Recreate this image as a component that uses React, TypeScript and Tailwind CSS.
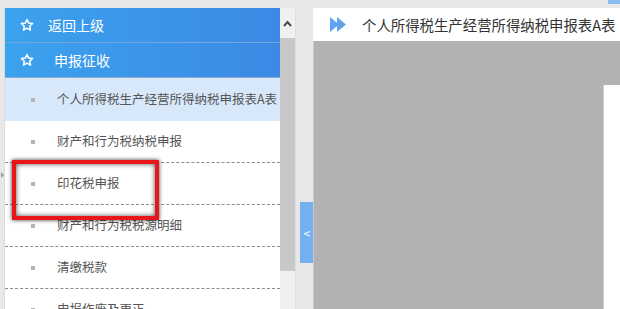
import React from 'react';

const font = { fontFamily: '"Noto Sans CJK SC", "Noto Sans", sans-serif' };

const Star = () => (
  <svg width="14" height="14" viewBox="0 0 24 24" fill="none" stroke="#ffffff" strokeWidth="2.6" strokeLinejoin="round">
    <path d="M12 2.5l2.9 6.2 6.7.8-5 4.6 1.4 6.7L12 17.4l-6 3.4 1.4-6.7-5-4.6 6.7-.8z" />
  </svg>
);

const MenuRow: React.FC<{ label: string; active?: boolean }> = ({ label, active }) => (
  <div
    className={`flex items-center shrink-0 ${
      active ? 'h-[43px] bg-[#d7e8fa]' : 'h-[42px] border-b border-dashed border-[#8c8c8c]'
    }`}
  >
    <span className="ml-[26px] w-[4px] h-[4px] bg-[#b4b4b4]" />
    <span className="ml-[22px] text-[12.5px] text-[#555] whitespace-nowrap">{label}</span>
  </div>
);

export default function App() {
  const items = ['财产和行为税纳税申报', '印花税申报', '财产和行为税税源明细', '清缴税款', '申报作废及更正'];

  return (
    <div className="relative w-[620px] h-[309px] overflow-hidden bg-[#e8e8e8]" style={font}>
      {/* top strip */}
      <div className="h-[8px] flex justify-end">
        <div className="w-[12px] h-[4px] bg-[#8cbcf0]" />
      </div>

      <div className="flex h-[301px]">
        {/* left menu */}
        <div className="ml-[4px] w-[276px] flex flex-col bg-white border-l border-[#dcdcdc] overflow-hidden">
          <div className="h-[35px] shrink-0 flex items-center bg-gradient-to-r from-[#3ba2ee] to-[#3c89e5] border-b border-[#72a6df]">
            <span className="ml-[15px] flex"><Star /></span>
            <span className="ml-[14px] text-[14px] text-white">返回上级</span>
          </div>
          <div className="h-[35px] shrink-0 flex items-center bg-gradient-to-r from-[#3ba2ee] to-[#3c89e5] border-b border-[#8eabcc]">
            <span className="ml-[15px] flex"><Star /></span>
            <span className="ml-[20px] text-[14px] text-white">申报征收</span>
          </div>
          <MenuRow label="个人所得税生产经营所得纳税申报表A表" active />
          {items.map((t) => (
            <MenuRow key={t} label={t} />
          ))}
        </div>

        {/* scrollbar */}
        <div className="w-[15px] flex flex-col bg-[#f0f0f0]">
          <div className="h-[30px] flex items-center justify-center">
            <svg width="9" height="7" viewBox="0 0 9 7" fill="none" stroke="#4a4a4a" strokeWidth="2">
              <polyline points="1,6 4.5,2 8,6" />
            </svg>
          </div>
          <div className="h-[233px] bg-[#c8c8c8]" />
        </div>

        {/* splitter */}
        <div className="w-[18px] border-l border-[#dedede]">
          <div className="mt-[194px] ml-[4px] w-[14px] h-[61px] bg-[#74b0f0] flex items-center justify-center text-white text-[12px]">
            &lt;
          </div>
        </div>

        {/* right content */}
        <div className="flex-1 flex flex-col">
          <div className="h-[33px] shrink-0 bg-white flex items-center">
            <svg className="ml-[17px]" width="16" height="15" viewBox="0 0 16 15" fill="#5fa3f0">
              <polygon points="0,0 9,7.5 0,15" />
              <polygon points="7,0 16,7.5 7,15" />
            </svg>
            <span className="ml-[16px] text-[14.4px] text-[#333] whitespace-nowrap">
              个人所得税生产经营所得纳税申报表A表
            </span>
          </div>
          <div className="flex-1 flex">
            <div className="flex-1 bg-[#b2b2b2] border-l border-[#c8c8c8]" />
            <div className="w-[17px] flex flex-col">
              <div className="h-[44px] bg-[#b2b2b2]" />
              <div className="flex-1 bg-white border-l border-[#d0d0d0]" />
            </div>
          </div>
        </div>
      </div>

      {/* side indicator */}
      <div className="absolute left-[1px] top-[172px] w-0 h-0 border-y-[3px] border-y-transparent border-l-[3px] border-l-[#9a9a9a]" />

      {/* red annotation box */}
      <div className="absolute left-[12px] top-[160px] w-[147px] h-[60px] border-4 border-[#e8151b] shadow-[0_0_4px_rgba(0,0,0,0.8),inset_0_0_5px_rgba(0,0,0,0.7)]" />
    </div>
  );
}
